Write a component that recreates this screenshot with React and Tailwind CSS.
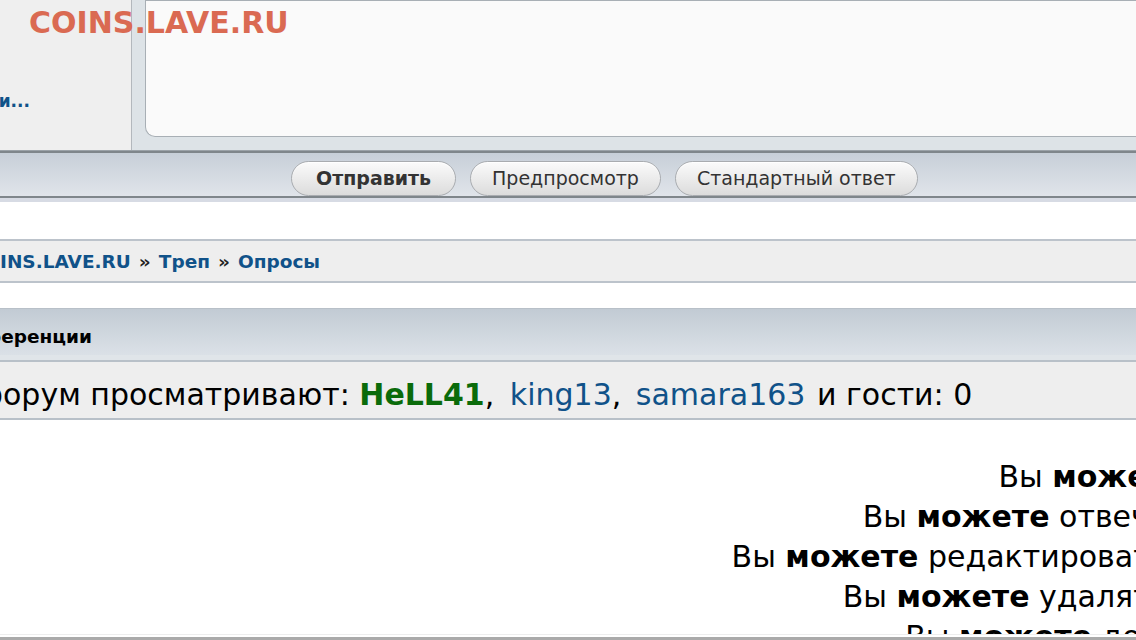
import React from "react";

const font = "font-['DejaVu_Sans','Verdana','Liberation_Sans',sans-serif]";

const Btn = ({ children, bold }) => (
  <button
    className={`h-[35px] rounded-full border border-[#a9acb0] bg-gradient-to-b from-[#fbfbfb] to-[#dcdcdc] text-[19px] text-[#333] shadow-[inset_0_1px_0_#fff] ${
      bold ? "px-[24px] font-bold" : "px-[21px]"
    }`}
  >
    {children}
  </button>
);

const Line = ({ rest }) => (
  <div>
    Вы <b>можете</b> {rest}
  </div>
);

const App = () => {
  return (
    <div className={`relative h-[640px] w-[1136px] overflow-hidden bg-white ${font}`}>
      {/* reply form: smilies + textarea */}
      <div className="flex h-[151px] border-b border-[#9ba2a8]">
        <div className="w-[132px] shrink-0 border-r border-[#b3b8bd] bg-[#efefef]">
          <div className="mt-[89px] flex w-[30px] justify-end whitespace-nowrap text-[17px] font-bold text-[#105289]">
            Все смайлики...
          </div>
        </div>
        <div className="flex-1 bg-[#dde3e7] pb-[13px] pl-[13px]">
          <div className="h-full rounded-bl-[10px] border border-r-0 border-[#a8afb5] bg-[#fafafa]"></div>
        </div>
      </div>

      {/* buttons */}
      <div className="border-y-2 border-[#7f868b] bg-gradient-to-b from-[#c7cfd8] to-[#e0e4ea]">
        <div className="flex h-[43px] items-end gap-[14px] pl-[291px]">
          <Btn bold>Отправить</Btn>
          <Btn>Предпросмотр</Btn>
          <Btn>Стандартный ответ</Btn>
        </div>
      </div>
      <div className="h-[4px] bg-[#d7dbe4]"></div>

      {/* breadcrumbs */}
      <div className="mt-[37px] flex h-[44px] items-center border-y-2 border-[#bcc3cb] bg-[#eeeeee] pt-[1px] text-[18.5px] font-bold whitespace-nowrap">
        <span className="flex w-0 justify-end text-[#105289]">CO</span>
        <span className="text-[#105289]">INS.LAVE.RU</span>
        <span className="px-[8px] text-[#222]">»</span>
        <span className="text-[#105289]">Треп</span>
        <span className="px-[8px] text-[#222]">»</span>
        <span className="text-[#105289]">Опросы</span>
      </div>

      {/* who is online */}
      <div className="mt-[25px] border-t border-[#b8c0c8]">
        <div className="flex h-[46px] items-center bg-gradient-to-b from-[#c2cbd4] to-[#dbe1e7] pt-[10px] text-[18.5px] font-bold text-black">
          <span className="flex w-[92px] justify-end whitespace-nowrap">Кто сейчас на конференции</span>
        </div>
        <div className="h-[5px] bg-[#e0e5e9]"></div>
        <div className="flex h-[60px] items-center border-y-2 border-[#b8c0c8] bg-[#eeeeee] pt-[8px] text-[30px] whitespace-nowrap text-black">
          <span className="flex w-[3px] justify-end">Этот ф</span>
          <span>орум просматривают:&nbsp;</span>
          <span className="font-bold text-[#0a6b0a]">HeLL41</span>
          <span className="mr-[6px]">,&nbsp;</span>
          <span className="text-[#105289]">king13</span>
          <span className="mr-[5px]">,&nbsp;</span>
          <span className="text-[#105289]">samara163</span>
          <span className="ml-[2px]">&nbsp;и гости: 0</span>
        </div>
      </div>

      {/* permissions */}
      <div className="mt-[37px] w-[1435px] text-right text-[30px] leading-[40px] whitespace-nowrap text-black">
        <Line rest="начинать темы" />
        <Line rest="отвечать на сообщения" />
        <Line rest="редактировать свои сообщения" />
        <Line rest="удалять свои сообщения" />
        <Line rest="добавлять вложения" />
      </div>

      <div className="absolute inset-x-0 bottom-0 h-[6px] border-t border-[#eeeeee] bg-white">
        <div className="mt-[2px] h-[3px] bg-[#aaaaaa]"></div>
      </div>

      {/* watermark */}
      <div className="absolute left-[29px] top-0 text-[30px] font-bold text-[#d9634a] opacity-95">
        COINS.LAVE.RU
      </div>
    </div>
  );
};

export default App;
